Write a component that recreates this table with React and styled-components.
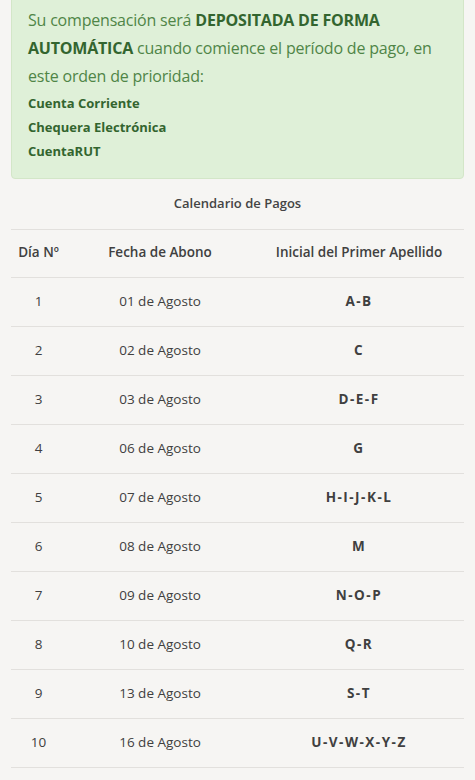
import React from 'react';
import styled, { createGlobalStyle } from 'styled-components';

const GlobalStyle = createGlobalStyle`
  html, body {
    margin: 0;
    padding: 0;
    background: #f6f5f3;
    font-family: "Open Sans", "Liberation Sans", sans-serif;
  }
`;

const Page = styled.div`
  padding: 0 11px;
  overflow: hidden;
  height: 780px;
`;

const Alert = styled.div`
  margin-top: -10px;
  padding: 15px 16px 15px;
  background: #dff0d8;
  border: 1px solid #d3e6c8;
  border-radius: 4px;
  color: #4f8547;
`;

const Lead = styled.p`
  margin: 0 0 1px;
  font-size: 16px;
  line-height: 28px;
  font-weight: 400;
  letter-spacing: -0.2px;

  strong {
    color: #33652f;
    font-weight: 700;
  }
`;

const Option = styled.div`
  font-size: 13px;
  line-height: 24px;
  font-weight: 700;
  color: #33652f;
`;

const Caption = styled.div`
  padding: 14px 0 16px;
  text-align: center;
  font-size: 13px;
  line-height: 20px;
  font-weight: 600;
  color: #444;
`;

const Table = styled.table`
  width: 100%;
  border-collapse: collapse;
  table-layout: fixed;
  border-bottom: 1px solid #e2e0dd;
  color: #404040;
  font-size: 13.5px;
`;

const Head = styled.th`
  width: ${p => p.$w};
  height: 44px;
  padding: 0 0 3px;
  text-align: center;
  font-weight: 600;
  border-top: 1px solid #e2e0dd;
`;

const Cell = styled.td`
  height: 46px;
  padding: 0 0 2px;
  text-align: center;
  font-weight: ${p => (p.$bold ? 700 : 400)};
  letter-spacing: ${p => (p.$bold ? '1.5px' : '0')};
  border-top: 1px solid #e2e0dd;
`;

const rows = [
  ['1', '01 de Agosto', 'A-B'],
  ['2', '02 de Agosto', 'C'],
  ['3', '03 de Agosto', 'D-E-F'],
  ['4', '06 de Agosto', 'G'],
  ['5', '07 de Agosto', 'H-I-J-K-L'],
  ['6', '08 de Agosto', 'M'],
  ['7', '09 de Agosto', 'N-O-P'],
  ['8', '10 de Agosto', 'Q-R'],
  ['9', '13 de Agosto', 'S-T'],
  ['10', '16 de Agosto', 'U-V-W-X-Y-Z'],
];

function App() {
  return (
    <Page>
      <GlobalStyle />
      <Alert>
        <Lead>
          Su compensación será <strong>DEPOSITADA DE FORMA AUTOMÁTICA</strong> cuando
          comience el período de pago, en este orden de prioridad:
        </Lead>
        <Option>Cuenta Corriente</Option>
        <Option>Chequera Electrónica</Option>
        <Option>CuentaRUT</Option>
      </Alert>
      <Caption>Calendario de Pagos</Caption>
      <Table>
        <thead>
          <tr>
            <Head $w="55px">Día Nº</Head>
            <Head $w="188px">Fecha de Abono</Head>
            <Head $w="auto">Inicial del Primer Apellido</Head>
          </tr>
        </thead>
        <tbody>
          {rows.map(([day, date, initials]) => (
            <tr key={day}>
              <Cell>{day}</Cell>
              <Cell>{date}</Cell>
              <Cell $bold>{initials}</Cell>
            </tr>
          ))}
        </tbody>
      </Table>
    </Page>
  );
}

export default App;
